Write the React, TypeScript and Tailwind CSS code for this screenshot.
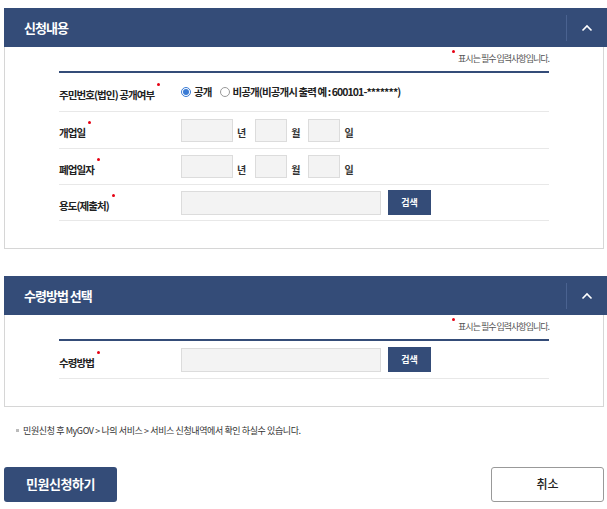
import React from 'react';

const font = { fontFamily: '"Noto Sans CJK KR", "Noto Sans", sans-serif' };

const Req = () => <span className="absolute -right-[6px] -top-[4px] h-[3px] w-[3px] rounded-full bg-[#e60012]" />;

const Label: React.FC<{ text: string }> = ({ text }) => (
  <div className="w-[122px] shrink-0">
    <span className="relative text-[10.5px] font-semibold text-[#222] tracking-[-0.9px]">
      {text}
      <Req />
    </span>
  </div>
);

const SectionHeader: React.FC<{ title: string }> = ({ title }) => (
  <div className="flex h-[39px] items-center bg-[#344c78]">
    <h2 className="flex-1 pl-[20px] text-[13px] font-bold tracking-[-1px] text-white">{title}</h2>
    <div className="h-[26px] w-px bg-[#4a6290]" />
    <div className="flex w-[40px] items-center justify-center">
      <svg width="12" height="8" viewBox="0 0 12 8" fill="none" stroke="white" strokeWidth="1.6">
        <path d="M1.5 6.5 L6 2 L10.5 6.5" />
      </svg>
    </div>
  </div>
);

const RequiredNote = () => (
  <div className="flex h-[24px] items-center justify-end">
    <span className="relative text-[9px] tracking-[-1px] text-[#555]">
      <span className="absolute -left-[6px] -top-[2px] h-[3px] w-[3px] rounded-full bg-[#e60012]" />
      표시는 필수 입력사항입니다.
    </span>
  </div>
);

const Unit: React.FC<{ t: string }> = ({ t }) => (
  <span className="text-[10px] font-bold text-[#333]">{t}</span>
);

const DateInputs = () => (
  <div className="flex items-center">
    <div className="w-[52px] h-[23px] border border-[#dcdcdc] bg-[#f3f3f3]" />
    <span className="ml-[4px] mr-[9px]"><Unit t="년" /></span>
    <div className="w-[32px] h-[23px] border border-[#dcdcdc] bg-[#f3f3f3]" />
    <span className="ml-[4px] mr-[8px]"><Unit t="월" /></span>
    <div className="w-[32px] h-[23px] border border-[#dcdcdc] bg-[#f3f3f3]" />
    <span className="ml-[4px]"><Unit t="일" /></span>
  </div>
);

const SearchInput = () => (
  <div className="flex items-center gap-[7px]">
    <div className="w-[200px] h-[24px] border border-[#dcdcdc] bg-[#f3f3f3]" />
    <button className="h-[25px] w-[43px] bg-[#344c78] text-[9px] font-bold text-white">검색</button>
  </div>
);

const Row: React.FC<{ h: string; children: React.ReactNode }> = ({ h, children }) => (
  <div className={`flex items-center border-b border-[#e8e8e8] ${h}`}>{children}</div>
);

export default function App() {
  return (
    <div className="w-[607px] bg-white pl-[4px] pt-[8px]" style={font}>
      <section>
        <SectionHeader title="신청내용" />
        <div className="mr-[3px] border border-t-0 border-[#d6d6d6] px-[54px] pb-[27px]">
          <RequiredNote />
          <div className="border-t-2 border-[#344c78]">
            <Row h="h-[39px]">
              <Label text="주민번호(법인) 공개여부" />
              <div className="flex items-center text-[10.5px] font-semibold text-[#222] tracking-[-0.9px]">
                <span className="mr-[3px] flex h-[10px] w-[10px] items-center justify-center rounded-full border border-[#3a7bd5]">
                  <span className="h-[6px] w-[6px] rounded-full bg-[#3a7bd5]" />
                </span>
                공개
                <span className="ml-[8px] mr-[3px] h-[10px] w-[10px] rounded-full border border-[#999]" />
                비공개(비공개시 출력 예 : 600101-*******)
              </div>
            </Row>
            <Row h="h-[37px]">
              <Label text="개업일" />
              <DateInputs />
            </Row>
            <Row h="h-[36px]">
              <Label text="폐업일자" />
              <DateInputs />
            </Row>
            <Row h="h-[36px]">
              <Label text="용도(제출처)" />
              <SearchInput />
            </Row>
          </div>
        </div>
      </section>

      <section className="mt-[27px]">
        <SectionHeader title="수령방법 선택" />
        <div className="mr-[3px] border border-t-0 border-[#d6d6d6] px-[54px] pb-[27px]">
          <RequiredNote />
          <div className="border-t-2 border-[#344c78]">
            <Row h="h-[38px]">
              <Label text="수령방법" />
              <SearchInput />
            </Row>
          </div>
        </div>
      </section>

      <p className="mt-[17px] flex items-center pl-[12px] text-[9px] tracking-[-0.4px] text-[#333]">
        <span className="mr-[4px] h-[3px] w-[3px] bg-[#bbb]" />
        민원신청 후 MyGOV &gt; 나의 서비스 &gt; 서비스 신청내역에서 확인 하실수 있습니다.
      </p>

      <div className="mr-[3px] mt-[29px] flex justify-between">
        <button className="h-[35px] w-[113px] rounded-[3px] bg-[#344c78] text-[13px] font-bold tracking-[-0.5px] text-white">
          민원신청하기
        </button>
        <button className="h-[35px] w-[113px] rounded-[3px] border border-[#999] bg-white text-[12px] font-medium text-[#222]">
          취소
        </button>
      </div>
    </div>
  );
}
